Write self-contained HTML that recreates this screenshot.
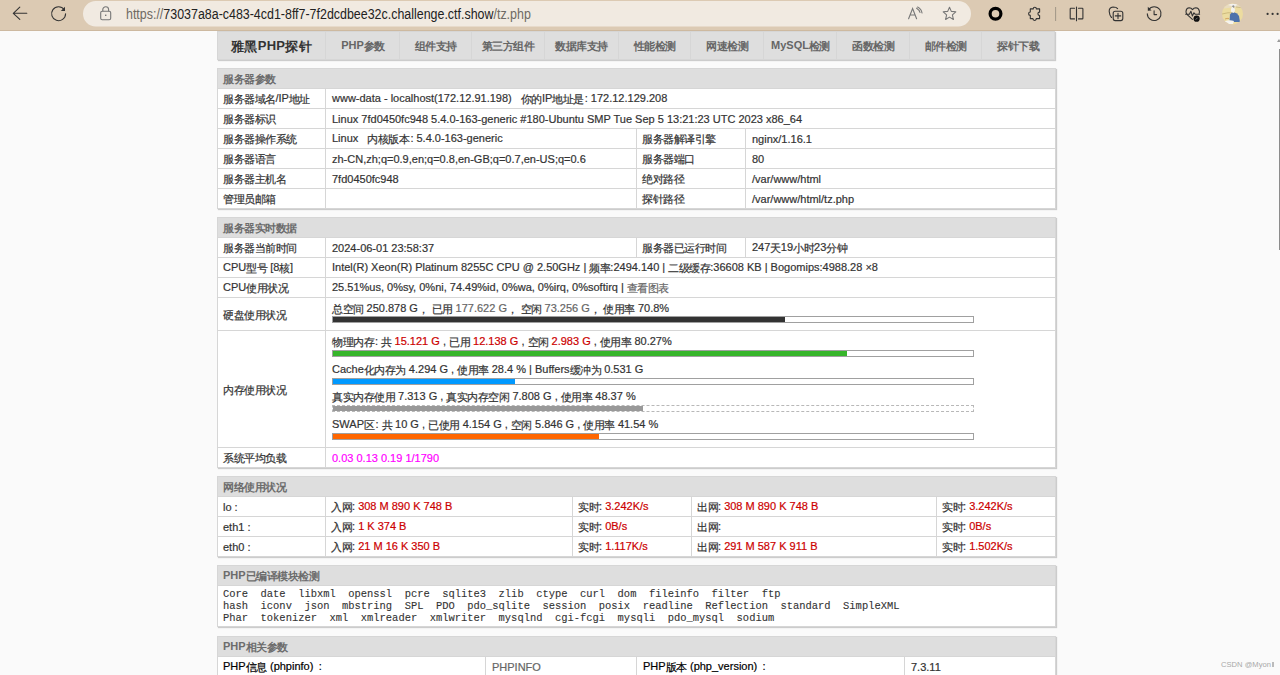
<!DOCTYPE html>
<html><head><meta charset="utf-8">
<style>
*{box-sizing:border-box}
html,body{margin:0;padding:0}
body{width:1280px;height:675px;overflow:hidden;background:#fafafa;position:relative;font-family:"Liberation Sans",sans-serif;font-size:11px;color:#333}
table{-webkit-text-stroke:0.2px}
#bar{position:absolute;left:0;top:0;width:1280px;height:31px;background:#dccab3;border-bottom:1px solid #cdb9a0}
#urltxt{position:absolute;left:126px;top:6px;font-size:14px;color:#222;letter-spacing:0;transform:scaleX(0.888);transform-origin:0 0;white-space:nowrap}
#urltxt span{color:#6f6a64}
table{position:absolute;left:217px;width:838px;border-collapse:collapse;border-spacing:0;table-layout:fixed;box-shadow:1px 1px 1px #ccc}
td,th{border:1px solid #d6d6d6;padding:0 5px;height:20px;white-space:nowrap;overflow:hidden;text-align:left;font-weight:normal}
th{background:#dedede;color:#6c6c6c;font-weight:bold}
th b{font-weight:bold}
th{-webkit-text-stroke:0}
td{background:#fff}
td+td{padding-left:6px}
.nav{-webkit-text-stroke:0}
.nav td:first-child,.nav td:first-child i{letter-spacing:0.3px}
.nav td{background:#dedede;text-align:center;color:#666;font-weight:bold;height:28px}
.red{color:#cc0000}
.rel{position:relative}
.ln{position:absolute;left:6px;line-height:15px;white-space:nowrap}
.bar{position:absolute;left:6px;border:1px solid #a0a0a0;background:#fff;height:7px;width:642px;padding:0}
.bar.dot{border:1px dashed #b8b8b8}
.bar div{height:5px}
i{font-style:normal}
.cj{position:relative;top:1px;letter-spacing:-0.5px}
.fc{display:inline-block;width:7px;padding-left:1px}
td.cs{padding-left:5px}
.pl{display:inline-block;width:7px;text-align:right}
.pr{display:inline-block;width:8px;text-align:left}
</style></head><body>
<div id="bar">
<svg width="1280" height="31" style="position:absolute;left:0;top:0">
<rect x="83" y="1" width="888" height="25.5" rx="12.75" fill="#f1eae1"/>
<g fill="none" stroke="#333" stroke-width="1.1" stroke-linecap="round" stroke-linejoin="round">
<path d="M13.3 13.3H26.8M13.3 13.3L19.8 7.2M13.3 13.3L19.8 19.3"/>
<path d="M64.2 9.5A7 7 0 1 0 65.6 13.8"/>
</g>
<path d="M65 6.8L65 11L60.8 11Z" fill="#333"/>
<g fill="none" stroke="#777" stroke-width="1.1">
<rect x="100.7" y="11.2" width="10" height="8.6" rx="1.5"/>
<path d="M102.8 11.2V9.6A2.9 2.9 0 0 1 108.6 9.6V11.2"/>
</g>
<rect x="105" y="14.6" width="1.4" height="1.4" fill="#777"/>
<g fill="none" stroke="#777" stroke-width="1.1" stroke-linecap="round">
<path d="M908.6 18.8L912.6 8.6L916.6 18.8M910.2 15H915"/>
<path d="M916.6 8.2Q919.5 10 920 12.4M917.6 7Q921.5 9 922 13"/>
<path d="M949.5 7.3L951.3 11.4L955.8 11.8L952.4 14.8L953.4 19.5L949.5 17.1L945.6 19.5L946.6 14.8L943.2 11.8L947.7 11.4Z" stroke-linejoin="round"/>
</g>
<circle cx="995.5" cy="13.8" r="5.4" fill="none" stroke="#000" stroke-width="3.2"/>
<g fill="none" stroke="#333" stroke-width="1.1" stroke-linejoin="round" stroke-linecap="round">
<path d="M1030.3 8.9H1033.2A1.6 1.6 0 0 1 1036.4 8.9H1039.6V12.1A1.7 1.7 0 0 0 1039.6 15.5V18.6H1036.3A1.7 1.9 0 0 1 1032.9 18.6H1030.3V15.4A1.7 1.7 0 0 1 1030.3 12V8.9Z"/>
<path d="M1074.5 8.3H1070.8Q1070.2 8.3 1070.2 9V18.2Q1070.2 18.9 1070.8 18.9H1074.5M1078.5 8.3H1082.3Q1082.9 8.3 1082.9 9V18.2Q1082.9 18.9 1082.3 18.9H1078.5M1076.5 7V20.7"/>
<path d="M1117.6 8.6Q1116.5 7 1113 7Q1109 7.5 1109.2 11.5Q1109.5 15.5 1111.5 17.5"/>
<rect x="1113.2" y="11.2" width="9.6" height="9.4" rx="2"/>
<path d="M1118 13.2V18.6M1115.3 15.9H1120.7"/>
<path d="M1148.6 9.6A6.9 6.9 0 1 1 1147.3 13.7"/>
<path d="M1154.1 10.8V14.6H1156.6"/>
<path d="M1192.4 19.4L1187.2 14.6Q1185.8 13 1186 11.3Q1186.4 8 1189.3 7.8Q1191.2 7.8 1192.5 9.6Q1193.8 7.8 1195.8 7.8Q1198.8 8 1199.4 11.2Q1199.6 12.8 1198.9 14.2M1185.7 14.2H1189.4L1190.9 11.2L1192.4 16L1193.9 12.8L1195.1 14.2H1199.6"/>
</g>
<circle cx="1196.6" cy="18.7" r="3.1" fill="#111"/>
<path d="M1195.6 19.7L1197.6 17.7" stroke="#888" stroke-width="0.8"/>
<defs><clipPath id="av"><circle cx="1232.5" cy="13.9" r="10.5"/></clipPath></defs>
<g clip-path="url(#av)">
<rect x="1221" y="2" width="24" height="24" fill="#ecdca0"/>
<path d="M1221 4H1245V8Q1236 6 1221 9Z" fill="#e9dcc0"/>
<path d="M1222 14Q1228 12 1234 13M1236 7Q1241 8 1244 7" stroke="#b9a468" stroke-width="0.6" fill="none"/>
<path d="M1228 5L1232 3.5L1238 4.5L1234 6.5Z" fill="#f3f1ee"/>
<path d="M1229.5 22L1230 14.5Q1231.5 12 1234 12.3Q1237.5 13 1239 16L1240 22Z" fill="#4d72ab"/>
<path d="M1231 11.5Q1230.5 8 1232 7Q1234.5 6.5 1235 9.5Q1235 12 1233.5 13Z" fill="#f4f2ee"/>
<path d="M1232 6.5Q1233 4.5 1234.5 6L1234 8Z" fill="#8d8f8f"/>
<path d="M1224.5 21.5Q1229 19.5 1234 21L1233 24H1225Z" fill="#f5f3ee"/>
<path d="M1225 19Q1227 18 1229 18.5" stroke="#c8863c" stroke-width="0.6" fill="none"/>
</g>
<g fill="#333"><circle cx="1267.6" cy="13.9" r="1.1"/><circle cx="1272.6" cy="13.9" r="1.1"/><circle cx="1277.6" cy="13.9" r="1.1"/></g>
<rect x="1055.2" y="7" width="0.9" height="14" fill="#9a8f82"/>
<path d="M1147.8 6.8L1147.8 10.8L1151.6 10.4Z" fill="#333"/>
</svg>
<div id="urltxt"><span>https://</span>73037a8a-c483-4cd1-8ff7-7f2dcdbee32c.challenge.ctf.show<span>/tz.php</span></div>
</div>

<table class="nav" style="top:31px;width:838px">
<colgroup><col style="width:108px"><col style="width:74px"><col style="width:72px"><col style="width:73px"><col style="width:74px"><col style="width:72px"><col style="width:73px"><col style="width:73px"><col style="width:73px"><col style="width:72px"><col style="width:73px"></colgroup>
<tr><td style="color:#333;font-size:13px" class="cs"><i class="cj">雅黑</i>PHP<i class="cj">探针</i></td><td>PHP<i class="cj">参数</i></td><td class="cs"><i class="cj">组件支持</i></td><td class="cs"><i class="cj">第三方组件</i></td><td class="cs"><i class="cj">数据库支持</i></td><td class="cs"><i class="cj">性能检测</i></td><td class="cs"><i class="cj">网速检测</i></td><td>MySQL<i class="cj">检测</i></td><td class="cs"><i class="cj">函数检测</i></td><td class="cs"><i class="cj">邮件检测</i></td><td class="cs"><i class="cj">探针下载</i></td></tr>
</table>

<table style="top:68px">
<colgroup><col style="width:108px"><col style="width:311px"><col style="width:109px"><col style="width:310px"></colgroup>
<tr><th colspan="4"><i class="cj">服务器参数</i></th></tr>
<tr><td class="cs"><i class="cj">服务器域名</i>/IP<i class="cj">地址</i></td><td colspan="3">www-data - localhost(172.12.91.198)&nbsp;&nbsp; <i class="cj">你的</i>IP<i class="cj">地址是</i><i class="fc">:</i>172.12.129.208</td></tr>
<tr><td class="cs"><i class="cj">服务器标识</i></td><td colspan="3">Linux 7fd0450fc948 5.4.0-163-generic #180-Ubuntu SMP Tue Sep 5 13:21:23 UTC 2023 x86_64</td></tr>
<tr><td class="cs"><i class="cj">服务器操作系统</i></td><td>Linux &nbsp; <i class="cj">内核版本</i><i class="fc">:</i>5.4.0-163-generic</td><td class="cs"><i class="cj">服务器解译引擎</i></td><td>nginx/1.16.1</td></tr>
<tr><td class="cs"><i class="cj">服务器语言</i></td><td>zh-CN,zh;q=0.9,en;q=0.8,en-GB;q=0.7,en-US;q=0.6</td><td class="cs"><i class="cj">服务器端口</i></td><td>80</td></tr>
<tr><td class="cs"><i class="cj">服务器主机名</i></td><td>7fd0450fc948</td><td class="cs"><i class="cj">绝对路径</i></td><td>/var/www/html</td></tr>
<tr><td class="cs"><i class="cj">管理员邮箱</i></td><td></td><td class="cs"><i class="cj">探针路径</i></td><td>/var/www/html/tz.php</td></tr>
</table>

<table style="top:217px">
<colgroup><col style="width:108px"><col style="width:311px"><col style="width:109px"><col style="width:310px"></colgroup>
<tr><th colspan="4"><i class="cj">服务器实时数据</i></th></tr>
<tr><td class="cs"><i class="cj">服务器当前时间</i></td><td>2024-06-01 23:58:37</td><td class="cs"><i class="cj">服务器已运行时间</i></td><td>247<i class="cj">天</i>19<i class="cj">小时</i>23<i class="cj">分钟</i></td></tr>
<tr><td>CPU<i class="cj">型号</i> [8<i class="cj">核</i>]</td><td colspan="3">Intel(R) Xeon(R) Platinum 8255C CPU @ 2.50GHz | <i class="cj">频率</i>:2494.140 | <i class="cj">二级缓存</i>:36608 KB | Bogomips:4988.28 ×8</td></tr>
<tr><td>CPU<i class="cj">使用状况</i></td><td colspan="3">25.51%us, 0%sy, 0%ni, 74.49%id, 0%wa, 0%irq, 0%softirq | <span style="color:#666"><i class="cj">查看图表</i></span></td></tr>
<tr><td style="height:33px" class="cs"><i class="cj">硬盘使用状况</i></td><td colspan="3" style="height:33px;padding:0;vertical-align:top"><div class="rel" style="height:32px">
<div class="ln" style="top:3px"><i class="cj">总空间</i> 250.878 G<i class="cj">，</i>&nbsp;<i class="cj">已用</i> <span style="color:#666">177.622 G</span><i class="cj">，</i>&nbsp;<i class="cj">空闲</i> <span style="color:#666">73.256 G</span><i class="cj">，</i>&nbsp;<i class="cj">使用率</i> 70.8%</div>
<div class="bar" style="top:18px"><div style="width:70.7%;background:#333"></div></div></div></td></tr>
<tr><td style="height:117px" class="cs"><i class="cj">内存使用状况</i></td><td colspan="3" style="height:117px;padding:0;vertical-align:top"><div class="rel" style="height:116px">
<div class="ln" style="top:3px"><i class="cj">物理内存</i><i class="fc">:</i><i class="cj">共</i> <span class="red">15.121 G</span> , <i class="cj">已用</i> <span class="red">12.138 G</span> , <i class="cj">空闲</i> <span class="red">2.983 G</span> , <i class="cj">使用率</i> 80.27%</div>
<div class="bar" style="top:18.5px"><div style="width:80.3%;background:#36b52a"></div></div>
<div class="ln" style="top:31px">Cache<i class="cj">化内存为</i> 4.294 G , <i class="cj">使用率</i> 28.4 % | Buffers<i class="cj">缓冲为</i> 0.531 G</div>
<div class="bar" style="top:47px"><div style="width:28.4%;background:#0099ff"></div></div>
<div class="ln" style="top:58px"><i class="cj">真实内存使用</i> 7.313 G , <i class="cj">真实内存空闲</i> 7.808 G , <i class="cj">使用率</i> 48.37 %</div>
<div class="bar dot" style="top:74px"><div style="width:48.4%;background:#999"></div></div>
<div class="ln" style="top:86px">SWAP<i class="cj">区</i><i class="fc">:</i><i class="cj">共</i> 10 G , <i class="cj">已使用</i> 4.154 G , <i class="cj">空闲</i> 5.846 G , <i class="cj">使用率</i> 41.54 %</div>
<div class="bar" style="top:102px"><div style="width:41.5%;background:#ff6600"></div></div>
</div></td></tr>
<tr><td class="cs"><i class="cj">系统平均负载</i></td><td colspan="3" style="color:#ff00ff">0.03 0.13 0.19 1/1790</td></tr>
</table>

<table style="top:476px">
<colgroup><col style="width:108px"><col style="width:247px"><col style="width:119px"><col style="width:245px"><col style="width:119px"></colgroup>
<tr><th colspan="5"><i class="cj">网络使用状况</i></th></tr>
<tr><td>lo :</td><td class="cs"><i class="cj">入网</i>: <span class="red">308 M 890 K 748 B</span></td><td class="cs"><i class="cj">实时</i>: <span class="red">3.242K/s</span></td><td class="cs"><i class="cj">出网</i>: <span class="red">308 M 890 K 748 B</span></td><td class="cs"><i class="cj">实时</i>: <span class="red">3.242K/s</span></td></tr>
<tr><td>eth1 :</td><td class="cs"><i class="cj">入网</i>: <span class="red">1 K 374 B</span></td><td class="cs"><i class="cj">实时</i>: <span class="red">0B/s</span></td><td class="cs"><i class="cj">出网</i>: <span class="red"></span></td><td class="cs"><i class="cj">实时</i>: <span class="red">0B/s</span></td></tr>
<tr><td>eth0 :</td><td class="cs"><i class="cj">入网</i>: <span class="red">21 M 16 K 350 B</span></td><td class="cs"><i class="cj">实时</i>: <span class="red">1.117K/s</span></td><td class="cs"><i class="cj">出网</i>: <span class="red">291 M 587 K 911 B</span></td><td class="cs"><i class="cj">实时</i>: <span class="red">1.502K/s</span></td></tr>
</table>

<table style="top:565px">
<colgroup><col style="width:838px"></colgroup>
<tr><th><b>PHP</b><i class="cj">已编译模块检测</i></th></tr>
<tr><td style="-webkit-text-stroke:0.1px;height:41px;vertical-align:top;padding-top:2px;font-family:'Liberation Mono',monospace;font-size:10.45px;line-height:12px;white-space:pre">Core  date  libxml  openssl  pcre  sqlite3  zlib  ctype  curl  dom  fileinfo  filter  ftp
hash  iconv  json  mbstring  SPL  PDO  pdo_sqlite  session  posix  readline  Reflection  standard  SimpleXML
Phar  tokenizer  xml  xmlreader  xmlwriter  mysqlnd  cgi-fcgi  mysqli  pdo_mysql  sodium</td></tr>
</table>

<table style="top:636px">
<colgroup><col style="width:268px"><col style="width:151px"><col style="width:268px"><col style="width:151px"></colgroup>
<tr><th colspan="4"><b>PHP</b><i class="cj">相关参数</i></th></tr>
<tr><td style="color:#000">PHP<i class="cj">信息</i><i class="pl">(</i>phpinfo<i class="pr">)</i><i class="fc">:</i></td><td style="color:#666">PHPINFO</td><td style="color:#000">PHP<i class="cj">版本</i><i class="pl">(</i>php_version<i class="pr">)</i><i class="fc">:</i></td><td>7.3.11</td></tr>
</table>

<div style="position:absolute;left:1221px;top:660px;font-size:7.6px;color:#a8a8a8;white-space:nowrap">CSDN @Myon<span style="display:inline-block;width:2px;height:5px;border:1px solid #bbb;margin-left:1px"></span></div>
<div style="position:absolute;left:1279px;top:49px;width:1px;height:201px;background:#8c8c8c"></div>
<div style="position:absolute;left:1277px;top:39px;width:0;height:0;border-left:2px solid transparent;border-right:2px solid transparent;border-bottom:3px solid #999"></div>
</body></html>
